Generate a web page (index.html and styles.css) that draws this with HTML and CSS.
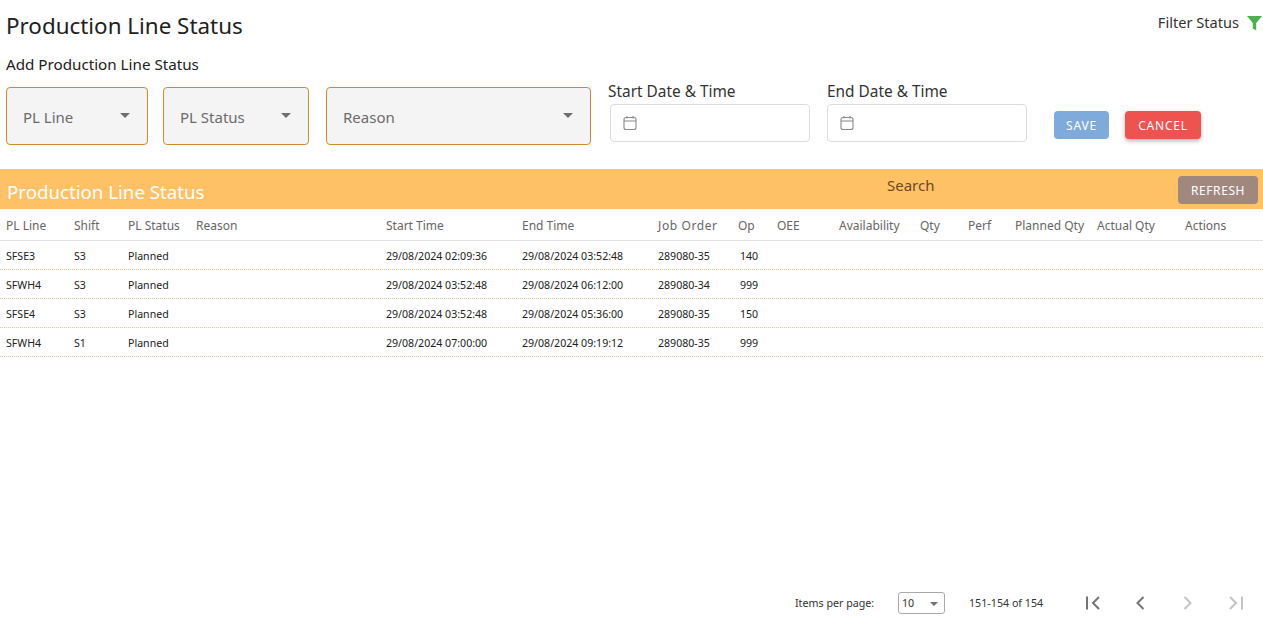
FILE: index.html
```html
<!DOCTYPE html>
<html lang="en">
<head>
<meta charset="utf-8">
<title>Production Line Status</title>
<link rel="stylesheet" href="styles.css">
</head>
<body>
<div class="page">
  <header class="top">
    <h1 class="title">Production Line Status</h1>
    <div class="filter">Filter Status
      <svg class="filter-icon" width="15" height="16" viewBox="0 0 15 16"><path d="M0 1h15L9.2 8v7.5L5.8 13.500V8z" fill="#4caf50"/></svg>
    </div>
  </header>
  <h2 class="subtitle">Add Production Line Status</h2>
  <form class="form">
    <div class="select s1"><span>PL Line</span><i class="caret"></i></div>
    <div class="select s2"><span>PL Status</span><i class="caret"></i></div>
    <div class="select s3"><span>Reason</span><i class="caret"></i></div>
    <div class="date d1">
      <label class="date-label">Start Date &amp; Time</label>
      <div class="date-input"><svg width="14" height="16" viewBox="0 0 14 16" fill="none" stroke="#8a8a8a" stroke-width="1.1"><rect x="1" y="2.5" width="12" height="12" rx="2"/><path d="M1 6h12M4 1v2.5M10 1v2.500"/></svg></div>
    </div>
    <div class="date d2">
      <label class="date-label">End Date &amp; Time</label>
      <div class="date-input"><svg width="14" height="16" viewBox="0 0 14 16" fill="none" stroke="#8a8a8a" stroke-width="1.1"><rect x="1" y="2.5" width="12" height="12" rx="2"/><path d="M1 6h12M4 1v2.5M10 1v2.500"/></svg></div>
    </div>
    <button type="button" class="btn save">SAVE</button>
    <button type="button" class="btn cancel">CANCEL</button>
  </form>
  <section class="band">
    <div class="band-title">Production Line Status</div>
    <div class="band-search">Search</div>
    <button type="button" class="btn refresh">REFRESH</button>
  </section>
  <div class="table">
    <div class="row head">
      <div>PL Line</div><div>Shift</div><div>PL Status</div><div>Reason</div><div>Start Time</div><div>End Time</div><div class="wide">Job Order</div><div>Op</div><div>OEE</div><div>Availability</div><div>Qty</div><div>Perf</div><div>Planned Qty</div><div>Actual Qty</div><div>Actions</div>
    </div>
    <div class="row">
      <div>SFSE3</div><div>S3</div><div>Planned</div><div></div><div>29/08/2024 02:09:36</div><div>29/08/2024 03:52:48</div><div>289080-35</div><div class="op">140</div><div></div><div></div><div></div><div></div><div></div><div></div><div></div>
    </div>
    <div class="row">
      <div>SFWH4</div><div>S3</div><div>Planned</div><div></div><div>29/08/2024 03:52:48</div><div>29/08/2024 06:12:00</div><div>289080-34</div><div class="op">999</div><div></div><div></div><div></div><div></div><div></div><div></div><div></div>
    </div>
    <div class="row">
      <div>SFSE4</div><div>S3</div><div>Planned</div><div></div><div>29/08/2024 03:52:48</div><div>29/08/2024 05:36:00</div><div>289080-35</div><div class="op">150</div><div></div><div></div><div></div><div></div><div></div><div></div><div></div>
    </div>
    <div class="row">
      <div>SFWH4</div><div>S1</div><div>Planned</div><div></div><div>29/08/2024 07:00:00</div><div>29/08/2024 09:19:12</div><div>289080-35</div><div class="op">999</div><div></div><div></div><div></div><div></div><div></div><div></div><div></div>
    </div>
  </div>
  <footer class="pager">
    <span class="pager-label">Items per page:</span>
    <div class="pager-select"><span>10</span><i class="caret small"></i></div>
    <span class="pager-range">151-154 of 154</span>
    <div class="pager-icons">
      <svg width="16" height="14" viewBox="0 0 16 14" fill="none" stroke="#757575" stroke-width="2"><path d="M2 0.5v13M14 1L8 7l6 6"/></svg>
      <svg width="10" height="14" viewBox="0 0 10 14" fill="none" stroke="#757575" stroke-width="2"><path d="M8.5 1L2.5 7l6 6"/></svg>
      <svg width="10" height="14" viewBox="0 0 10 14" fill="none" stroke="#c4c4c4" stroke-width="2"><path d="M1.5 1l6 6-6 6"/></svg>
      <svg width="16" height="14" viewBox="0 0 16 14" fill="none" stroke="#c4c4c4" stroke-width="2"><path d="M14 0.5v13M2 1l6 6-6 6"/></svg>
    </div>
  </footer>
</div>
</body>
</html>
```
FILE: styles.css
```css
* { box-sizing: border-box; }
html, body { margin: 0; height: 100%; overflow: hidden; background: #fff; }
body { font-family: "Noto Sans", "Open Sans", sans-serif; color: #212121; }
.page { height: 623px; display: flex; flex-direction: column; }

.top { display: flex; justify-content: space-between; align-items: flex-start; padding: 10px 1px 0 6px; height: 54px; }
.title { margin: 0; font-size: 22.4px; font-weight: 400; line-height: 32px; color: #212121; }
.filter { display: flex; align-items: center; gap: 8px; font-size: 14.6px; line-height: 24px; color: #333; }
.filter-icon { margin-top: 2px; }

.subtitle { margin: 0; padding-left: 6px; font-size: 15.2px; font-weight: 400; line-height: 20px; height: 33px; color: #212121; }

.form { display: flex; align-items: flex-start; height: 82px; padding-left: 6px; }
.select { height: 58px; background: #f4f4f4; border: 1px solid #d08a2e; border-radius: 4px; display: flex; align-items: center; justify-content: space-between; font-size: 15px; color: #6b6b6b; padding: 2px 17px 0 16px; }
.select span { line-height: 20px; }
.s1 { width: 142px; }
.s2 { width: 146px; margin-left: 15px; }
.s3 { width: 265px; margin-left: 17px; }
.caret { width: 0; height: 0; border-left: 5px solid transparent; border-right: 5px solid transparent; border-top: 5px solid #6f6f6f; margin-top: -3px; }
.caret.small { border-left-width: 4px; border-right-width: 4px; border-top-width: 4px; margin-top: 1px; }

.date { display: flex; flex-direction: column; width: 200px; margin-top: -6px; }
.d1 { margin-left: 17px; }
.d2 { margin-left: 19px; }
.date-label { font-size: 15.4px; line-height: 21px; color: #333; height: 23px; white-space: nowrap; }
.d1 .date-input { margin-left: 2px; }
.date-input { height: 38px; width: 200px; border: 1px solid #dcdcdc; border-radius: 4px; display: flex; align-items: center; padding-left: 12px; background: #fff; }

.btn { border: 0; border-radius: 4px; color: #fff; font-family: inherit; font-size: 12px; letter-spacing: 0.8px; padding: 2px 0 0; height: 28px; line-height: 26px; }
.save { width: 55px; background: #7fabdc; margin-left: 27px; margin-top: 24px; }
.cancel { width: 76px; background: #ef5350; margin-left: 16px; margin-top: 24px; box-shadow: 0 2px 4px rgba(0,0,0,.3); }

.band { height: 40px; background: #ffc166; display: flex; align-items: center; padding-left: 7px; }
.band-title { font-size: 18.7px; line-height: 24px; color: #fff; width: 880px; margin-top: 5px; }
.band-search { font-size: 15px; color: #6a4a1e; width: 291px; margin-top: -9px; }
.refresh { width: 80px; background: #a1887f; margin-top: 2px; letter-spacing: 0.6px; }

.table { display: flex; flex-direction: column; }
.row { display: grid; grid-template-columns: 68px 54px 68px 190px 136px 136px 80px 39px 62px 81px 48px 47px 82px 88px 84px; height: 29px; align-items: center; padding-top: 2px; border-bottom: 1px dotted #d8c79a; font-size: 10.6px; color: #212121; }
.row > div { padding-left: 6px; white-space: nowrap; }
.row > .op { padding-left: 8px; }
.row.head { height: 32px; border-bottom: 1px solid #e0e0e0; font-size: 12px; color: #666; }
.row.head > .wide { letter-spacing: 0.6px; }

.pager { margin-top: auto; height: 40px; display: flex; align-items: center; padding-left: 795px; font-size: 10.7px; color: #333; }
.pager-label { flex: none; width: 103px; }
.pager-select { flex: none; width: 47px; height: 22px; border: 1px solid #aaa; border-radius: 3px; display: flex; align-items: center; justify-content: space-between; padding: 0 6px 0 3px; }
.pager-range { flex: none; margin-left: 24px; width: 116px; }
.pager-icons { flex: none; display: flex; align-items: center; gap: 32px; }
.pager-icons svg:nth-child(2) { margin-left: 2px; }
.pager-icons svg:nth-child(3) { margin-left: 6px; }
.pager-icons svg:nth-child(4) { margin-left: 3px; }
```
